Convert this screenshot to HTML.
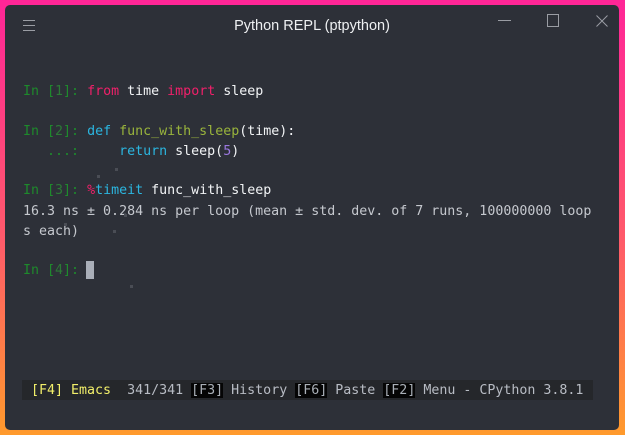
<!DOCTYPE html><html><head><style>
*{margin:0;padding:0;box-sizing:border-box}
body{width:625px;height:435px;overflow:hidden;background:linear-gradient(180deg,#ff2597 0%,#ff5a6a 55%,#ff9a2c 100%);position:relative;font-family:"DejaVu Sans Mono","Liberation Mono",monospace}
.win{position:absolute;left:5px;top:5px;width:614px;height:425px;background:#2d3038;border-radius:5px}
.title{position:absolute;left:0;right:0;top:13px;text-align:center;color:#eef0f2;font-family:"Liberation Sans",sans-serif;font-size:14.5px}
.l{position:absolute;left:23px;font-size:13.3px;white-space:pre;color:#c5c8ce;line-height:20px}
.g{color:#1e8a2c}.gd{color:#2c7a36}.r{color:#f0206a}.w{color:#f2f4f6}.c{color:#2bb6e0}.o{color:#99b43c}.p{color:#9b78e0}
.sb{position:absolute;left:22px;top:380px;width:571px;height:20px;background:#25272b}
.sb .l{left:9px;top:1px;color:#b8bcc4}
.y{color:#f2ef6a}.k{background:#050505;color:#aab0b8}
.cur{position:absolute;left:86px;top:261px;width:8px;height:18px;background:#a9aeb8}
.dot{position:absolute;width:3px;height:3px;background:#4a4d55}
</style></head><body>
<div class="win">
<svg style="position:absolute;left:18px;top:15px" width="12" height="12"><path d="M0 0.5H12M0 5.5H12M0 10.5H12" stroke="#9a9da4" stroke-width="1"/></svg>
<div class="title">Python REPL (ptpython)</div>
<svg style="position:absolute;left:493px;top:8px" width="14" height="8"><path d="M0 7.5H13" stroke="#9a9da4"/></svg>
<svg style="position:absolute;left:542px;top:9px" width="13" height="14"><rect x="0.5" y="0.5" width="11" height="12" fill="none" stroke="#9a9da4"/></svg>
<svg style="position:absolute;left:591px;top:10px" width="13" height="13"><path d="M0.5 0.5L11.5 11.5M11.5 0.5L0.5 11.5" stroke="#9a9da4"/></svg>
</div>
<div class="l" style="top:82px"><span class="g">In [</span><span class="gd">1</span><span class="g">]: </span><span class="r">from</span> <span class="w">time</span> <span class="r">import</span> <span class="w">sleep</span></div>
<div class="l" style="top:122px"><span class="g">In [</span><span class="gd">2</span><span class="g">]: </span><span class="c">def</span> <span class="o">func_with_sleep</span><span class="w">(time):</span></div>
<div class="l" style="top:142px"><span class="g">   ...:     </span><span class="c">return</span> <span class="w">sleep(</span><span class="p">5</span><span class="w">)</span></div>
<div class="l" style="top:181px"><span class="g">In [</span><span class="gd">3</span><span class="g">]: </span><span class="r">%</span><span class="c">timeit</span> <span class="w">func_with_sleep</span></div>
<div class="l" style="top:202px">16.3 ns ± 0.284 ns per loop (mean ± std. dev. of 7 runs, 100000000 loop</div>
<div class="l" style="top:222px">s each)</div>
<div class="l" style="top:261px"><span class="g">In [</span><span class="gd">4</span><span class="g">]: </span></div>
<div class="cur"></div>
<div class="dot" style="left:115px;top:168px"></div><div class="dot" style="left:97px;top:175px"></div>
<div class="dot" style="left:124px;top:214px"></div><div class="dot" style="left:64px;top:223px"></div>
<div class="dot" style="left:113px;top:230px"></div><div class="dot" style="left:130px;top:285px"></div>
<div class="sb"><div class="l"><span class="y">[F4] Emacs</span>  341/341 <span class="k">[F3]</span> History <span class="k">[F6]</span> Paste <span class="k">[F2]</span> Menu - CPython 3.8.1</div></div>
</body></html>
